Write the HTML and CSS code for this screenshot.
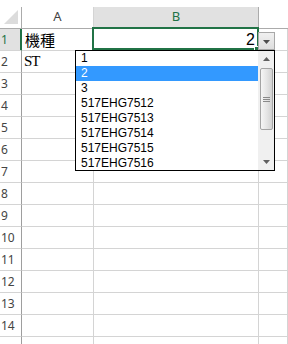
FILE: index.html
```html
<!DOCTYPE html>
<html lang="zh-Hant">

<head>
    <meta charset="UTF-8">
    <meta name="viewport" content="width=device-width, initial-scale=1.0">
    <title>機種</title>
    <link rel="stylesheet" href="styles.css">
</head>

<body>

    <div class="sheet">
        <div class="corner">
            <svg width="21" height="21" viewBox="0 0 21 21"><polygon points="18,3 18,17 4,17" fill="#dcdcdc" /></svg>
        </div>
        <div class="col-head">A</div>
        <div class="col-head col-head-active">B</div>
        <div class="col-head col-head-last"></div>

        <div class="row-head row-head-active">1</div>
        <div class="cell cell-cjk">機種</div>
        <div class="cell cell-num">2</div>
        <div class="cell"></div>

        <div class="row-head">2</div>
        <div class="cell cell-serif">ST</div>
        <div class="cell"></div>
        <div class="cell"></div>

        <div class="row-head">3</div><div class="cell"></div><div class="cell"></div><div class="cell"></div>
        <div class="row-head">4</div><div class="cell"></div><div class="cell"></div><div class="cell"></div>
        <div class="row-head">5</div><div class="cell"></div><div class="cell"></div><div class="cell"></div>
        <div class="row-head">6</div><div class="cell"></div><div class="cell"></div><div class="cell"></div>
        <div class="row-head">7</div><div class="cell"></div><div class="cell"></div><div class="cell"></div>
        <div class="row-head">8</div><div class="cell"></div><div class="cell"></div><div class="cell"></div>
        <div class="row-head">9</div><div class="cell"></div><div class="cell"></div><div class="cell"></div>
        <div class="row-head">10</div><div class="cell"></div><div class="cell"></div><div class="cell"></div>
        <div class="row-head">11</div><div class="cell"></div><div class="cell"></div><div class="cell"></div>
        <div class="row-head">12</div><div class="cell"></div><div class="cell"></div><div class="cell"></div>
        <div class="row-head">13</div><div class="cell"></div><div class="cell"></div><div class="cell"></div>
        <div class="row-head">14</div><div class="cell"></div><div class="cell"></div><div class="cell"></div>
        <!-- 第15列只露出一點，不顯示列號 -->
        <div class="row-head"></div><div class="cell"></div><div class="cell"></div><div class="cell"></div>

        <!-- 選取框 + 下拉清單 -->
        <div class="active-cell"></div>
        <div class="fill-handle"></div>

        <div class="drop-btn">
            <svg width="7" height="4" viewBox="0 0 7 4"><polygon points="0,0 7,0 3.5,4" fill="#4d4d4d" /></svg>
        </div>

        <div class="drop-list">
            <ul class="drop-items">
                <li>1</li>
                <li class="selected">2</li>
                <li>3</li>
                <li>517EHG7512</li>
                <li>517EHG7513</li>
                <li>517EHG7514</li>
                <li>517EHG7515</li>
                <li>517EHG7516</li>
            </ul>
            <div class="scrollbar">
                <div class="sb-arrow">
                    <svg width="7" height="4" viewBox="0 0 7 4"><polygon points="3.5,0 7,4 0,4" fill="#606060" /></svg>
                </div>
                <div class="sb-thumb">
                    <span></span><span></span><span></span>
                </div>
                <div class="sb-space"></div>
                <div class="sb-arrow">
                    <svg width="7" height="4" viewBox="0 0 7 4"><polygon points="0,0 7,0 3.5,4" fill="#606060" /></svg>
                </div>
            </div>
        </div>
    </div>

</body>

</html>
```
FILE: styles.css
```css
* {
    margin: 0;
    padding: 0;
    list-style: none;
    box-sizing: border-box;
}

html,
body {
    width: 100%;
    height: 100%;
    background: #fff;
    overflow: hidden;
}

.sheet {
    position: relative;
    padding-top: 7px;
    display: grid;
    grid-template-columns: 22px 72px 165px 1fr;
    grid-auto-rows: 22px;
    font-family: "Noto Sans", "Liberation Sans", sans-serif;
}

.corner {
    border-right: solid 1px #ababab;
    border-bottom: solid 1px #ababab;
}

.corner svg {
    display: block;
}

.col-head {
    border-right: solid 1px #d4d4d4;
    border-bottom: solid 1px #ababab;
    color: #444;
    font-size: 13px;
    line-height: 18px;
    text-align: center;
}

.col-head-active {
    background: #e1e1e1;
    color: #217346;
    border-right-color: #ababab;
    border-bottom-color: #217346;
}

.col-head-last {
    border-right: none;
}

.row-head {
    border-right: solid 1px #9e9e9e;
    border-bottom: solid 1px #d4d4d4;
    color: #444;
    font-size: 12px;
    line-height: 16px;
    padding: 3px 0 0 1px;
}

.row-head-active {
    background: #e1e1e1;
    color: #217346;
    border-right-color: #217346;
    box-shadow: inset -1px 0 0 #217346;
}

.cell {
    border-right: solid 1px #d4d4d4;
    border-bottom: solid 1px #d4d4d4;
    display: flex;
    align-items: flex-end;
    padding: 0 3px 1px;
    color: #000;
}

.cell-cjk {
    font-family: "Noto Sans CJK TC", "Noto Sans CJK SC", sans-serif;
    font-size: 15px;
    line-height: 19px;
}

.cell-serif {
    font-family: "Liberation Serif", serif;
    font-size: 15px;
    line-height: 18px;
    letter-spacing: -1px;
    padding-left: 2px;
    padding-bottom: 2px;
}

.cell-num {
    justify-content: flex-end;
    font-family: "Liberation Sans", sans-serif;
    font-size: 16px;
    line-height: 18px;
    padding-right: 3px;
}

.active-cell {
    position: absolute;
    left: 92px;
    top: 27px;
    width: 167px;
    height: 23px;
    border: solid 2px #217346;
}

.fill-handle {
    position: absolute;
    left: 254px;
    top: 46px;
    width: 6px;
    height: 6px;
    background: #217346;
    border: solid 1px #fff;
}

.drop-btn {
    position: absolute;
    left: 258px;
    top: 32px;
    width: 17px;
    height: 18px;
    border: solid 1px #a8a8a8;
    background: linear-gradient(#f0f0f0, #dedede);
    display: flex;
    align-items: center;
    justify-content: center;
    padding-top: 1px;
}

.drop-btn svg,
.sb-arrow svg {
    display: block;
}

.drop-list {
    position: absolute;
    left: 75px;
    top: 50px;
    width: 200px;
    height: 121px;
    border: solid 1px #000;
    background: #fff;
    display: flex;
    overflow: hidden;
}

.drop-items {
    flex: 1;
    font-family: "Liberation Sans", sans-serif;
    font-size: 12px;
    line-height: 15px;
    color: #000;
}

.drop-items li {
    height: 15px;
    padding-left: 5px;
    white-space: nowrap;
}

.drop-items .selected {
    background: #3399ff;
    color: #fff;
}

.scrollbar {
    width: 16px;
    background: #f0f0f0;
    display: flex;
    flex-direction: column;
    align-items: center;
}

.sb-arrow {
    height: 16px;
    width: 100%;
    display: flex;
    align-items: center;
    justify-content: center;
}

.sb-thumb {
    width: 13px;
    height: 62px;
    margin-top: 1px;
    border: solid 1px #a4a4a4;
    border-radius: 2px;
    background: linear-gradient(to right, #f6f6f6, #e4e4e4 55%, #d2d2d2);
    display: flex;
    flex-direction: column;
    align-items: center;
    justify-content: center;
    gap: 1px;
}

.sb-thumb span {
    width: 7px;
    height: 1px;
    background: #8a8a8a;
}

.sb-space {
    flex: 1;
}
```
